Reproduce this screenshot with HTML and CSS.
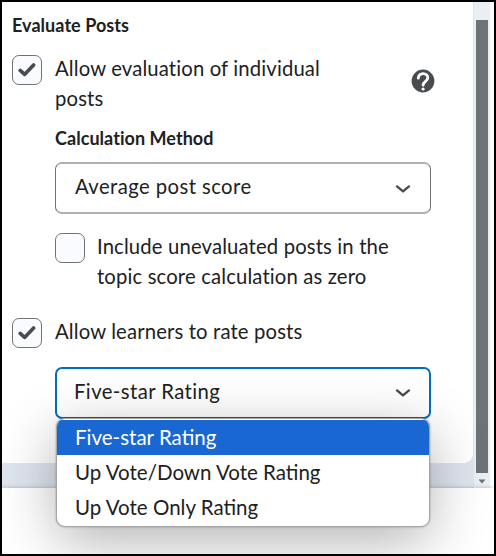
FILE: index.html
```html
<!DOCTYPE html>
<html lang="en">
<head>
    <meta charset="UTF-8">
    <meta name="viewport" content="width=device-width, initial-scale=1.0">
    <title>Evaluate Posts</title>
    <link rel="stylesheet" href="styles.css">
</head>
<body>
    <div class="window">
        <div class="main">
            <div class="panel">
                <h2 class="heading">Evaluate Posts</h2>
                <div class="check-row">
                    <span class="checkbox">
                        <svg width="18" height="16" viewBox="0 0 18 16"><path d="M2.2 8.4 L6.6 12.4 L15.6 3"/></svg>
                    </span>
                    <span class="label">Allow evaluation of individual<br>posts</span>
                    <svg class="help" width="24" height="24" viewBox="0 0 24 24">
                        <circle cx="12" cy="12" r="11.4"/>
                        <path d="M7.3 9.2 C7.3 6.4 9.4 4.7 12.1 4.7 C14.9 4.7 16.8 6.4 16.8 8.8 C16.8 12.4 12.1 12.4 12.1 16.2"/>
                        <circle class="dot" cx="12.1" cy="20" r="1.6"/>
                    </svg>
                </div>
                <div class="group">
                    <h3 class="heading sub">Calculation Method</h3>
                    <div class="select">
                        <span>Average post score</span>
                        <svg class="chevron" width="16" height="10" viewBox="0 0 16 10"><path d="M2 2.4 L8 7.4 L14 2.4"/></svg>
                    </div>
                    <div class="check-row include">
                        <span class="checkbox"></span>
                        <span class="label">Include unevaluated posts in the<br>topic score calculation as zero</span>
                    </div>
                </div>
                <div class="check-row learners">
                    <span class="checkbox">
                        <svg width="18" height="16" viewBox="0 0 18 16"><path d="M2.2 8.4 L6.6 12.4 L15.6 3"/></svg>
                    </span>
                    <span class="label">Allow learners to rate posts</span>
                </div>
                <div class="group">
                    <div class="select focused">
                        <span>Five-star Rating</span>
                        <svg class="chevron" width="16" height="10" viewBox="0 0 16 10"><path d="M2 2.4 L8 7.4 L14 2.4"/></svg>
                    </div>
                    <ul class="menu">
                        <li class="option selected">Five-star Rating</li>
                        <li class="option">Up Vote/Down Vote Rating</li>
                        <li class="option">Up Vote Only Rating</li>
                    </ul>
                </div>
            </div>
            <div class="scrollbar">
                <div class="thumb"></div>
                <svg class="arrow" width="8" height="5" viewBox="0 0 8 5"><path d="M0.5 0.5 H7.5 L4 4.5 Z"/></svg>
            </div>
        </div>
        <div class="footer"></div>
    </div>
</body>
</html>
```

FILE: styles.css
```css
* { box-sizing: border-box; }
body { margin: 0; font-family: Lato, "Liberation Sans", sans-serif; font-size: 20.3px; color: #202122; }
.window { width: 496px; height: 556px; border: 2px solid #000; display: flex; flex-direction: column; overflow: hidden; background: #fff; }
.main { display: flex; height: 486px; background: #dfe5ef; }
.panel { width: 471px; height: 461px; padding: 11px 0 0 10px; background: #fff; border-bottom-right-radius: 9px; }
.footer { flex: 1; background: #fff; box-shadow: 0 0 4px rgba(0, 0, 0, 0.25); }

.heading { margin: 0; font-size: 18px; line-height: 24px; font-weight: 700; letter-spacing: 0.05px; }
.check-row { display: flex; align-items: flex-start; margin-top: 16px; }
.checkbox { flex: none; width: 30px; height: 30px; margin: 2px 13px 0 0; display: flex; align-items: center; justify-content: center; background: #f9fbff; border: 1px solid #6e7376; border-radius: 7px; }
.checkbox path { fill: none; stroke: #494c4e; stroke-width: 3.6; stroke-linecap: round; stroke-linejoin: round; }
.label { line-height: 30px; letter-spacing: 0.14px; white-space: nowrap; }
.help { margin: 16px 0 0 91px; fill: #494c4e; }
.help path { fill: none; stroke: #fff; stroke-width: 2.8; stroke-linecap: round; }
.help .dot { fill: #fff; }

.group { position: relative; width: 376px; margin-left: 43px; }
.sub { margin-top: 13px; }
.select { height: 52px; margin-top: 12px; padding: 0 19px 4px 19px; display: flex; align-items: center; justify-content: space-between; letter-spacing: 0.42px; background: #fff; border: solid #adb0b2; border-width: 2px 1px; border-left-color: #6e7376; border-right-color: #6e7376; border-radius: 7px; }
.chevron { margin-top: 5px; }
.chevron path { fill: none; stroke: #494c4e; stroke-width: 2.4; stroke-linecap: round; stroke-linejoin: round; }
.include { margin-top: 17px; }
.include .label { margin-left: -1px; }
.learners { margin-top: 25px; }
.focused { margin-top: 19px; padding: 0 18px 5px 17px; border: 2px solid #006fbf; }

.menu { position: absolute; top: 51px; left: 1px; width: 374px; height: 109px; margin: 0; padding: 1px 0; list-style: none; overflow: hidden; background: #fff; border: 1px solid #a5a5a5; border-radius: 9px; box-shadow: 0 0 2px rgba(0, 0, 0, 0.35), 0 14px 56px rgba(0, 0, 0, 0.3); }
.option { height: 35px; padding-left: 18px; font-size: 20.5px; line-height: 35px; }
.selected { background: #1967d2; color: #fff; }

.scrollbar { width: 17px; padding: 18px 3px 0 2px; background: #eaeff6; border-left: 1px solid #dfe5ef; }
.thumb { width: 12px; height: 453px; background: #6e7376; }
.arrow { display: block; margin: 6px auto 0; fill: #6e7376; }
.main::after { content: ""; flex: 1; background: #fff; }
```
